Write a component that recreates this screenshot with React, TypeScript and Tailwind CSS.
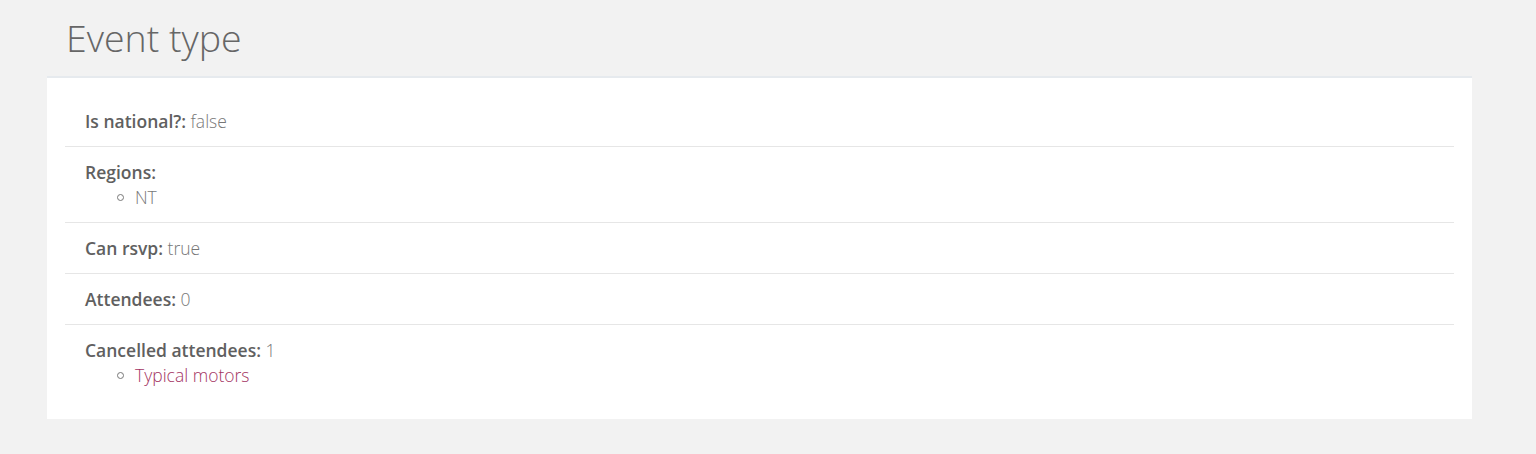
import React from "react";

const Row = ({ children, last }: { children: React.ReactNode; last?: boolean }) => (
  <div className={`px-5 pt-[13px] pb-[12px] ${last ? "" : "border-b border-[#e6e6e6]"}`}>{children}</div>
);

const Label = ({ children }: { children: React.ReactNode }) => (
  <span className="font-semibold text-[#606060]">{children}</span>
);

const Value = ({ children, className = "" }: { children: React.ReactNode; className?: string }) => (
  <span className={`font-light text-[#777777] ${className}`}>{children}</span>
);

const Bullet = ({ children }: { children: React.ReactNode }) => (
  <div className="flex items-center pl-[32px]">
    <span className="inline-block w-[7px] h-[7px] rounded-full border border-[#777777] mr-[11px]" />
    {children}
  </div>
);

export default function App() {
  return (
    <div
      className="min-h-[454px] bg-[#f2f2f2] pl-[47px] pr-[64px]"
      style={{ fontFamily: '"Open Sans", sans-serif' }}
    >
      <h1 className="pl-[19px] pt-[12px] h-[76px] text-[37.5px] leading-[52px] font-light text-[#666666]">Event type</h1>
      <div className="bg-white border-t-2 border-[#e6eaee] pt-[18px] px-[18px] pb-[19px] text-[17.5px] leading-[25px]">
        <Row>
          <Label>Is national?:</Label> <Value>false</Value>
        </Row>
        <Row>
          <div>
            <Label>Regions:</Label>
          </div>
          <Bullet>
            <Value>NT</Value>
          </Bullet>
        </Row>
        <Row>
          <Label>Can rsvp:</Label> <Value>true</Value>
        </Row>
        <Row>
          <Label>Attendees:</Label> <Value>0</Value>
        </Row>
        <Row last>
          <div>
            <Label>Cancelled attendees:</Label> <Value>1</Value>
          </div>
          <Bullet>
            <span className="font-light text-[#a33462]">Typical motors</span>
          </Bullet>
        </Row>
      </div>
    </div>
  );
}
